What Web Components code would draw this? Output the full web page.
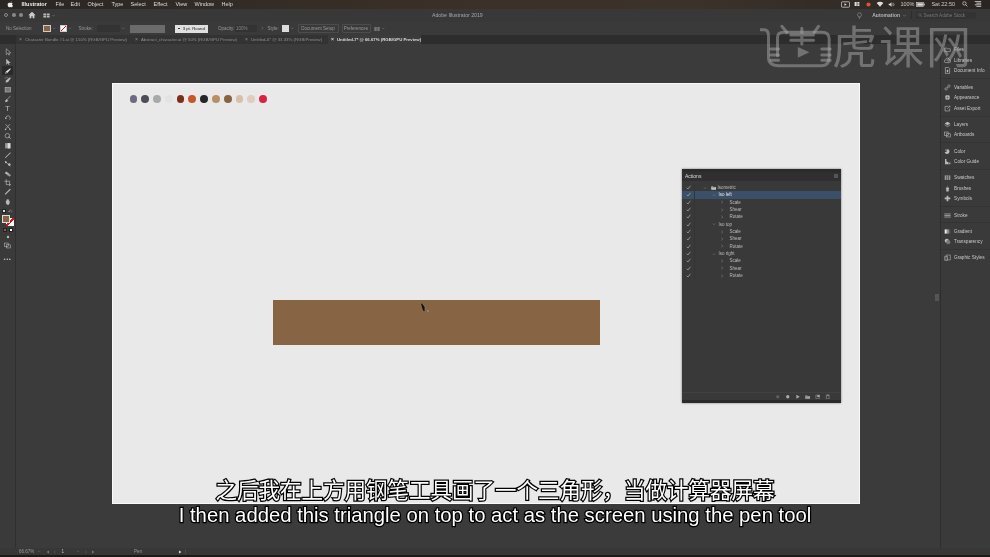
<!DOCTYPE html>
<html>
<head>
<meta charset="utf-8">
<title>Illustrator</title>
<style>
  html, body { margin: 0; height: 100%; background: #3b3b3b; overflow: hidden; }
  body { font-family: "Liberation Sans", Arial, sans-serif; }
</style>
</head>
<body>
<ai-app>
  <menu-bar slot="top"></menu-bar>
  <app-bar slot="top"></app-bar>
  <control-bar slot="top"></control-bar>
  <doc-tabs slot="top"></doc-tabs>
  <tool-bar slot="left"></tool-bar>
  <art-canvas slot="center">
    <actions-panel slot="float">
      <action-row level="0" label="Isometric"></action-row>
      <action-row level="1" label="Iso left" selected></action-row>
      <action-row level="2" label="Scale"></action-row>
      <action-row level="2" label="Shear"></action-row>
      <action-row level="2" label="Rotate"></action-row>
      <action-row level="1" label="Iso top"></action-row>
      <action-row level="2" label="Scale"></action-row>
      <action-row level="2" label="Shear"></action-row>
      <action-row level="2" label="Rotate"></action-row>
      <action-row level="1" label="Iso right"></action-row>
      <action-row level="2" label="Scale"></action-row>
      <action-row level="2" label="Shear"></action-row>
      <action-row level="2" label="Rotate"></action-row>
    </actions-panel>
  </art-canvas>
  <panel-dock slot="right"></panel-dock>
  <status-bar slot="bottom"></status-bar>
  <brand-mark slot="over"></brand-mark>
  <sub-title slot="over"
    zh="之后我在上方用钢笔工具画了一个三角形，当做计算器屏幕"
    en="I then added this triangle on top to act as the screen using the pen tool"></sub-title>
</ai-app>

<script>
const ICONS = {
  select: '<path d="M3 1v8l2-2 1.500 2.500 1-.5L6.200 6.500H9z" fill="none" stroke="currentColor" stroke-width=".8"/>',
  direct: '<path d="M3 1v8l2-2 1.500 2.500 1-.5L6.200 6.500H9z" fill="currentColor"/>',
  pen: '<path d="M8.500 1.500 2.500 6 1.500 9l3-1 4.500-5.500z" fill="currentColor"/><circle cx="3.500" cy="7" r=".7" fill="#333"/>',
  curv: '<path d="M8 1.500 3 5.500 2 9l3.500-1L9 3z" fill="currentColor"/><path d="M1 3q3-2 5 0" fill="none" stroke="currentColor" stroke-width=".6"/>',
  rect: '<rect x="1.500" y="2" width="7" height="6" fill="#777" stroke="currentColor" stroke-width=".8"/>',
  brush: '<path d="M9 1 4 6M4 6q-2 0-2 3q3 0 3-2z" fill="currentColor" stroke="currentColor" stroke-width=".9"/>',
  rotate: '<path d="M2.500 6.500a3 3 0 1 1 5 1" fill="none" stroke="currentColor" stroke-width=".9"/><path d="M1 5l1.500 2L4 5z" fill="currentColor"/>',
  scissors: '<path d="M2 1.500 8 8M8 1.500 2 8" stroke="currentColor" stroke-width=".9"/><circle cx="2" cy="8.500" r="1" fill="currentColor"/><circle cx="8" cy="8.500" r="1" fill="currentColor"/>',
  warp: '<circle cx="4.500" cy="5" r="3" fill="none" stroke="currentColor" stroke-width=".9"/><path d="M6 6l3 3" stroke="currentColor" stroke-width="1"/>',
  mesh: '<rect x="1.500" y="1.500" width="7" height="7" fill="#999"/><rect x="5" y="1.500" width="3.500" height="7" fill="#ddd"/>',
  eyedrop: '<path d="M8.500 1.500 2 8l-1 1.500L2.500 9 9 2.500z" fill="currentColor"/>',
  blend: '<path d="M1.500 1.500 5 5l3.500 3.500" stroke="currentColor"/><circle cx="2.500" cy="3" r="1.300" fill="currentColor"/><circle cx="7" cy="6" r="1.800" fill="currentColor"/>',
  symbol: '<rect x="1.500" y="3" width="5" height="3" transform="rotate(35 4 4.500)" fill="currentColor"/><rect x="4" y="5" width="5" height="3" transform="rotate(35 6.500 6.500)" fill="#999"/>',
  crop: '<path d="M3 .5V7.500H9.500M.5 3H7.500V9.500" fill="none" stroke="currentColor" stroke-width=".9"/>',
  ruler: '<path d="M8.500 1.500 1.500 8.500" stroke="currentColor" stroke-width="1.600"/>',
  hand: '<path d="M2.500 5V3.500h1V2h1v-.5h1V2h1v1.500h1V6.500L6.500 9H4L2.500 6.500z" fill="currentColor"/>',
  home: '<path d="M5 1 .5 5.200H2V9h2.200V6.500h1.600V9H8V5.200h1.500z" fill="currentColor"/>',
  layout: '<path d="M.5 2h4v2.500h-4zM5.500 2h4v2.500h-4zM.5 5.500h4V8h-4zM5.500 5.500h4V8h-4z" fill="currentColor"/>',
  chev: '<path d="M2.500 4 5 6.500 7.500 4" fill="none" stroke="currentColor" stroke-width="1"/>',
  right: '<path d="M3.500 2 7 5 3.500 8" fill="none" stroke="currentColor" stroke-width="1"/>',
  play: '<path d="M2.500 1.500 8.500 5 2.500 8.500z" fill="currentColor"/>',
  check: '<path d="M1.500 5.500 4 8l4.800-6.500" fill="none" stroke="currentColor" stroke-width="1.500"/>',
  folder: '<path d="M.5 2.500h3.500l.8 1H9.500V8.500H.5z" fill="currentColor"/><path d="M2 5h6" stroke="#333" stroke-width=".7"/>',
  bulb: '<circle cx="5" cy="4" r="2.800" fill="none" stroke="currentColor" stroke-width=".8"/><path d="M3.800 8h2.400M4.200 9.300h1.600" stroke="currentColor" stroke-width=".8"/>',
  search: '<circle cx="4" cy="4" r="2.800" fill="none" stroke="currentColor" stroke-width="1.100"/><path d="M6 6l3 3" stroke="currentColor" stroke-width="1.200"/>',
  lines: '<path d="M1 2h8M3 4h6M1 6h8M3 8h6" stroke="currentColor" stroke-width="1"/>',
  stop: '<rect x="2.500" y="2.500" width="5" height="5" fill="currentColor"/>',
  record: '<circle cx="5" cy="5" r="3" fill="currentColor"/>',
  page: '<path d="M1.500 2h7v6h-7z" fill="none" stroke="currentColor" stroke-width=".8"/><path d="M4 2h4.500v3.500H4z" fill="currentColor"/>',
  trash: '<path d="M2.500 3h5v6h-5zM1.500 2h7M4 1h2" fill="none" stroke="currentColor" stroke-width=".9"/>',
  files: '<path d="M1 3h3l1 1h4v4H1z" fill="none" stroke="currentColor" stroke-width=".8"/>',
  libs: '<path d="M2.500 8a2 2 0 0 1 0-4 2.500 2.500 0 0 1 5 0 2 2 0 0 1 0 4z" fill="none" stroke="currentColor" stroke-width=".9"/>',
  doc: '<path d="M2 .5h4.500L8 2v7.500H2z" fill="none" stroke="currentColor" stroke-width=".9"/><rect x="4" y="4" width="2" height="3.500" fill="currentColor"/>',
  vars: '<circle cx="3" cy="7" r="1.700" fill="none" stroke="currentColor" stroke-width=".8"/><circle cx="7" cy="3" r="1.700" fill="none" stroke="currentColor" stroke-width=".8"/><path d="M4.200 5.800 5.800 4.200" stroke="currentColor" stroke-width=".8"/>',
  appear: '<circle cx="5" cy="5" r="3.500" fill="currentColor"/><path d="M1 5h8M5 1v8" stroke="#3a3a3a" stroke-width=".5"/>',
  export: '<path d="M6 2H1.500v6.500H8V5" fill="none" stroke="currentColor" stroke-width=".9"/><path d="M4.500 5.500 8.500 1.500M6.500 1.500h2v2" fill="none" stroke="currentColor" stroke-width=".8"/>',
  layers: '<path d="M5 1 9 3.500 5 6 1 3.500z" fill="currentColor"/><path d="M1 5.500 5 8l4-2.500" fill="none" stroke="currentColor" stroke-width=".9"/>',
  boards: '<rect x="1" y="1.500" width="5" height="5" fill="none" stroke="currentColor" stroke-width=".8"/><rect x="3.500" y="4" width="5.500" height="4.500" fill="none" stroke="currentColor" stroke-width=".8"/>',
  color: '<path d="M5 1.500a3.500 3.500 0 1 1-4 4.500c2 0 3-.5 4-4.500z" fill="currentColor"/><circle cx="3" cy="3" r="1.500" fill="#777"/>',
  guide: '<path d="M1.500 9V1.500h2V5l3 1v3z" fill="currentColor"/><path d="M6.500 9 9 5v4z" fill="#aaa"/>',
  swatches: '<path d="M1 2h8v6.500H1z" fill="#999"/><path d="M3.500 2h1v6.500h-1zM6 2h1v6.500H6z" fill="#444"/>',
  brushes: '<path d="M5 1v3M3 4h4v1.500H3zM3.500 5.500V9h3V5.500" fill="currentColor" stroke="currentColor" stroke-width=".5"/>',
  symbols: '<path d="M3.800 1h2.400v2.500H9V6H6.200v3H3.800V6H1V3.500h2.800z" fill="currentColor"/>',
  stroke: '<path d="M.5 2.800h9M.5 5h9M.5 7.200h9" stroke="currentColor" stroke-width="1"/>',
  gradient: '<rect x="1" y="2" width="3" height="6" fill="#eee"/><rect x="4" y="2" width="3" height="6" fill="#999"/><rect x="7" y="2" width="2" height="6" fill="#555"/>',
  transp: '<circle cx="4" cy="4" r="3" fill="currentColor"/><circle cx="6" cy="6" r="3" fill="#777"/>',
  styles: '<path d="M3 1.500h6v7H3z" fill="none" stroke="currentColor" stroke-width=".8"/><path d="M1 3.500h4V9H1z" fill="#555" stroke="currentColor" stroke-width=".8"/>',
  apple: '<path d="M5.200 2.600C5.600 1.500 6.300 1 7 .8c0 1-.6 1.800-1.800 1.800zM5 3c.8 0 1.200-.4 2-.4.700 0 1.400.4 1.800 1-1.500.9-1.200 3 .4 3.600C8.700 8.500 8 9.500 7.200 9.500c-.8 0-1-.4-1.900-.4s-1.200.4-1.900.4C2.200 9.500 1 7.400 1 5.600 1 3.800 2.200 2.700 3.400 2.700c.7 0 1.200.3 1.600.3z" fill="currentColor"/>',
  cam: '<rect x=".5" y="2" width="9" height="6" rx=".8" fill="none" stroke="currentColor" stroke-width=".8"/><path d="M3.800 3.500 6.500 5 3.800 6.500z" fill="currentColor"/>',
  grid: '<path d="M1 1.500h3.500v7H1zM5.500 1.500h3.500v3H5.500zM5.500 5.500h3.500v3H5.500z" fill="currentColor"/>',
  wifi: '<path d="M5 8.500 .8 3.800a6 6 0 0 1 8.400 0z" fill="currentColor"/>',
  vol: '<path d="M1 3.800h1.800L5 1.800v6.400L2.800 6.200H1z" fill="currentColor"/><path d="M6.300 3.500a2 2 0 0 1 0 3M7.500 2.500a3.500 3.500 0 0 1 0 5" fill="none" stroke="currentColor" stroke-width=".7"/>',
  batt: '<rect x=".5" y="2.800" width="8" height="4.400" fill="none" stroke="currentColor" stroke-width=".7"/><rect x="1.300" y="3.600" width="6.400" height="2.800" fill="currentColor"/><rect x="9" y="4" width=".8" height="2" fill="currentColor"/>'
};

class AiIcon extends HTMLElement {
  connectedCallback() {
    const size = this.getAttribute('size') || 8;
    this.attachShadow({ mode: 'open' }).innerHTML = `
      <style>:host { display: inline-flex; width: ${size}px; height: ${size}px; flex: none; }
      svg { width: 100%; height: 100%; display: block; }</style>
      <svg viewBox="0 0 10 10">${ICONS[this.getAttribute('name')] || ''}</svg>`;
  }
}
customElements.define('ai-icon', AiIcon);

class AiApp extends HTMLElement {
  constructor() {
    super();
    this.attachShadow({ mode: 'open' }).innerHTML = `
      <style>
        :host { display: block; position: relative; width: 990px; height: 557px; overflow: hidden;
          background: #3b3b3b; filter: blur(.35px); }
        .page { display: flex; flex-direction: column; height: 100%; }
        .top { display: flex; flex-direction: column; }
        .work { flex: 1; display: flex; min-height: 0; }
        .center { flex: 1; display: flex; min-width: 0; }
        .foot { display: flex; flex-direction: column; }
      </style>
      <div class="page">
        <div class="top"><slot name="top"></slot></div>
        <div class="work">
          <slot name="left"></slot>
          <div class="center"><slot name="center"></slot></div>
          <slot name="right"></slot>
        </div>
        <div class="foot"><slot name="bottom"></slot></div>
      </div>
      <slot name="over"></slot>`;
  }
}
customElements.define('ai-app', AiApp);

class MenuBar extends HTMLElement {
  constructor() {
    super();
    const items = [['File',15],['Edit',17],['Object',24],['Type',19],['Select',23],['Effect',22],['View',19],['Window',27],['Help',14]];
    this.attachShadow({ mode: 'open' }).innerHTML = `
      <style>
        :host { display: flex; align-items: center; height: 8.500px; padding-left: 7px;
          background: linear-gradient(90deg, #2a2623 0%, #3a3027 45%, #3b322a 70%, #2a2522 100%);
          color: #ddd; font-size: 5.500px; white-space: nowrap; }
        b { width: 34px; margin-left: 8px; color: #eee; flex: none; }
        .menu span { display: inline-block; }
        .menu { display: flex; width: 181px; flex: none; }
        .right { margin-left: auto; padding-right: 8px; display: flex; align-items: center; color: #ccc; }
        ai-icon { color: #ddd; }
      </style>
      <ai-icon name="apple" size="6.500" style="color:#eee"></ai-icon><b>Illustrator</b>
      <div class="menu">${items.map(([t, w]) => `<span style="width:${w}px">${t}</span>`).join('')}</div>
      <div class="right">
        <ai-icon name="cam" size="9"></ai-icon>
        <ai-icon name="grid" size="6" style="margin-left:4px"></ai-icon>
        <ai-icon name="record" size="7" style="margin-left:5px;color:#d3573a"></ai-icon>
        <ai-icon name="wifi" size="8" style="margin-left:4px"></ai-icon>
        <ai-icon name="vol" size="7" style="margin-left:4px"></ai-icon>
        <span style="margin-left:5px">100%</span>
        <ai-icon name="batt" size="9" style="margin-left:2px"></ai-icon>
        <span style="margin-left:6px">Sat 22:50</span>
        <ai-icon name="search" size="6" style="margin-left:7px"></ai-icon>
        <ai-icon name="lines" size="8" style="margin-left:6px"></ai-icon>
      </div>`;
  }
}
customElements.define('menu-bar', MenuBar);

class AppBar extends HTMLElement {
  constructor() {
    super();
    this.attachShadow({ mode: 'open' }).innerHTML = `
      <style>
        :host { display: grid; grid-template-columns: 432px auto 1fr; align-items: center; height: 13.500px;
          background: #383838; color: #a5a5a5; font-size: 5.200px; }
        .l { display: flex; align-items: center; padding-left: 4px; }
        .l i { width: 4px; height: 4px; border-radius: 50%; background: #8a8a8a; margin-right: 3.500px; }
        .l i:first-child { background: none; border: .8px solid #8a8a8a; box-sizing: border-box; }
        .r { display: flex; align-items: center; justify-content: flex-end; padding-right: 14px; }
        .auto { font-weight: bold; margin: 0 2px 0 9px; color: #b5b5b5; font-size: 5px; }
        .search { width: 60px; height: 7px; background: #333; margin-left: 4px; font-size: 4.600px; color: #777;
          display: flex; align-items: center; gap: 1px; padding-left: 2px; box-sizing: border-box; }
        .div { width: 1px; height: 8px; background: #2c2c2c; margin-left: 4px; }
        ai-icon { color: #bbb; }
      </style>
      <div class="l">
        <i></i><i></i><i></i>
        <ai-icon name="home" size="8" style="margin:0 7px 0 1px;color:#ccc"></ai-icon>
        <ai-icon name="layout" size="7"></ai-icon>
        <ai-icon name="chev" size="5" style="margin-left:1.500px;color:#888"></ai-icon>
      </div>
      <div class="c">Adobe Illustrator 2019</div>
      <div class="r">
        <ai-icon name="bulb" size="7" style="color:#999"></ai-icon>
        <span class="auto">Automation</span>
        <ai-icon name="chev" size="5" style="color:#888"></ai-icon>
        <span class="div"></span>
        <div class="search"><ai-icon name="search" size="4.500" style="color:#777"></ai-icon>Search Adobe Stock</div>
      </div>`;
  }
}
customElements.define('app-bar', AppBar);

class ControlBar extends HTMLElement {
  constructor() {
    super();
    this.attachShadow({ mode: 'open' }).innerHTML = `
      <style>
        :host { display: flex; align-items: center; height: 13px; padding-left: 6px; background: #3a3a3a;
          color: #999; font-size: 4.500px; white-space: nowrap; border-bottom: 0; }
        .sw { width: 7.500px; height: 7.500px; flex: none; box-sizing: border-box; border: .5px solid #ccc; }
        .fill { background: #876444; margin-left: 14px; }
        .st { background: linear-gradient(135deg, #fff 46%, #d11 46%, #d11 56%, #fff 56%); margin-left: 3.500px; }
        .field { height: 7px; background: #333; flex: none; }
        .grey { width: 35px; height: 8px; background: #6b6b6b; margin-left: 5px; flex: none; }
        .round { width: 33px; height: 8px; background: #e0e0e0; color: #222; margin-left: 10px; flex: none; display: flex;
          align-items: center; justify-content: center; gap: 3px; font-size: 4.300px; }
        .round i { width: 1.500px; height: 1.500px; background: #222; border-radius: 50%; }
        .style { width: 7.500px; height: 7.500px; background: #ddd; margin-left: 3px; flex: none; }
        .btn { border: .5px solid #4c4c4c; border-radius: 1px; height: 7.500px; line-height: 7.500px; text-align: center; box-sizing: content-box; flex: none; }
        ai-icon { color: #888; }
      </style>
      <span style="width:23px">No Selection</span>
      <span class="sw fill"></span><ai-icon name="chev" size="4.500" style="margin-left:1px"></ai-icon>
      <span class="sw st"></span><ai-icon name="chev" size="4.500" style="margin-left:1px"></ai-icon>
      <span style="margin-left:6px;width:14px">Stroke:</span>
      <span class="field" style="width:23px;margin-left:4px"></span><ai-icon name="chev" size="4.500" style="margin-left:1px"></ai-icon>
      <span class="grey"></span>
      <span class="round"><i></i>3 pt. Round</span>
      <span style="margin-left:10px;width:17px">Opacity:</span>
      <span class="field" style="width:21px;padding-left:1px;line-height:7px;color:#888">100%</span>
      <ai-icon name="right" size="4.500" style="margin:0 3px"></ai-icon>
      <span style="width:11px;margin-left:0">Style:</span>
      <span class="style"></span><ai-icon name="chev" size="4.500" style="margin-left:1px"></ai-icon>
      <span class="btn" style="width:39px;margin-left:3px">Document Setup</span>
      <span class="btn" style="width:27px;margin-left:3px">Preferences</span>
      <ai-icon name="layout" size="6" style="margin-left:3px"></ai-icon><ai-icon name="chev" size="4.500" style="margin-left:1px"></ai-icon>`;
  }
}
customElements.define('control-bar', ControlBar);

class DocTabs extends HTMLElement {
  constructor() {
    super();
    const tabs = [
      ['Character Bundle #1.ai @ 150% (RGB/GPU Preview)', 116, false],
      ['Abstract_character.ai @ 50% (RGB/GPU Preview)', 110, false],
      ['Untitled-6* @ 33.33% (RGB/Preview)', 86, false],
      ['Untitled-7* @ 66.67% (RGB/GPU Preview)', 93, true]
    ];
    this.attachShadow({ mode: 'open' }).innerHTML = `
      <style>
        :host { display: flex; height: 8.500px; padding-left: 16px; background: #2d2d2d; color: #8e8e8e; font-size: 4.300px; white-space: nowrap; }
        .tab { display: flex; align-items: center; gap: 3px; padding-left: 3px; box-sizing: border-box; background: #333; flex: none; }
        .tab.on { background: #3b3b3b; color: #ddd; font-weight: bold; }
        .x { font-size: 5px; }
      </style>
      ${tabs.map(([t, w, on]) => `<div class="tab${on ? ' on' : ''}" style="width:${w}px"><span class="x">×</span><span>${t}</span></div>`).join('')}`;
  }
}
customElements.define('doc-tabs', DocTabs);

class ToolBar extends HTMLElement {
  constructor() {
    super();
    const names = ['select','direct','pen','curv','rect','brush','T','rotate','scissors','warp','mesh','eyedrop','blend','symbol','crop','ruler','hand'];
    this.attachShadow({ mode: 'open' }).innerHTML = `
      <style>
        :host { display: flex; flex-direction: column; align-items: center; width: 15px; flex: none; padding-top: 4px;
          border-right: 1px solid #2f2f2f; background: #3a3a3a; color: #b9b9b9; box-sizing: content-box; }
        .tool { height: 9.330px; width: 11px; display: flex; align-items: center; justify-content: center; font-size: 8px; }
        .tool.on { background: #2a2a2a; color: #e6e6e6; }
        .mini { display: flex; gap: 2px; align-items: center; margin-top: 3px; }
        .sq { width: 4px; height: 4px; background: #ddd; border: .5px solid #222; box-sizing: border-box; }
        .swatches { position: relative; width: 12px; height: 12px; margin-top: 1px; }
        .f, .s { position: absolute; width: 8px; height: 8px; box-sizing: border-box; }
        .f { left: 0; top: 0; background: #876444; border: .5px solid #ddd; z-index: 1; }
        .s { left: 4px; top: 3.500px; background: linear-gradient(135deg, #fff 42%, #d11 42%, #d11 58%, #fff 58%); }
        .dots { margin-top: 8px; letter-spacing: .5px; font-size: 6px; line-height: 4px; }
      </style>
      ${names.map(n => `<div class="tool${n === 'pen' ? ' on' : ''}">${n === 'T' ? 'T' : `<ai-icon name="${n}" size="7.500"></ai-icon>`}</div>`).join('')}
      <div class="mini"><span class="sq"></span><ai-icon name="rotate" size="4.500"></ai-icon></div>
      <div class="swatches"><span class="f"></span><span class="s"></span></div>
      <div class="mini" style="margin-top:1px"><span class="sq" style="background:#876444"></span><span class="sq" style="background:#fff"></span></div>
      <div class="mini" style="margin-top:3px"><ai-icon name="record" size="4"></ai-icon></div>
      <div class="mini" style="margin-top:3px"><ai-icon name="boards" size="7"></ai-icon></div>
      <div class="dots">•••</div>`;
  }
}
customElements.define('tool-bar', ToolBar);

class ColorDot extends HTMLElement {
  constructor() {
    super();
    this.attachShadow({ mode: 'open' }).innerHTML = `
      <style>:host { display: block; width: 7.800px; height: 7.800px; border-radius: 50%; background: var(--c); flex: none; }</style>`;
  }
  connectedCallback() { this.style.setProperty('--c', this.getAttribute('color')); }
}
customElements.define('color-dot', ColorDot);

class ArtCanvas extends HTMLElement {
  constructor() {
    super();
    const dots = ['#6b6a80','#4d4e58','#a8a9a9','#e3e3e3','#7a3018','#c9562a','#25262a','#b98f64','#88633f','#d8bfa8','#dfcdbd','#d9233f'];
    this.attachShadow({ mode: 'open' }).innerHTML = `
      <style>
        :host { display: block; flex: 1; position: relative; background: #3b3b3b; padding: 39.500px 0 0 96px; box-sizing: border-box; }
        .board { position: relative; width: 748px; height: 421px; box-sizing: border-box; background: #e9e9e9; border: 1px solid #fafafa; }
        .dots { display: flex; gap: 4px; padding: 11.200px 0 0 16.500px; }
        .shape { position: absolute; left: 160px; top: 215.500px; width: 327px; height: 45.500px; background: #876444; }
        .cursor { position: absolute; left: 146px; top: 2px; }
        .thumb { position: absolute; right: 1px; top: 250px; width: 4px; height: 7px; background: #555; }
        ::slotted(actions-panel) { position: absolute; left: 666px; top: 125px; }
      </style>
      <div class="board">
        <div class="dots">${dots.map(c => `<color-dot color="${c}"></color-dot>`).join('')}</div>
        <div class="shape">
          <svg class="cursor" width="12" height="12" viewBox="0 0 12 12"><path d="M1.500 1.500 3 1 6 5 6 8.500 4.500 10 3 7z" fill="#111" stroke="#a58a66" stroke-width=".6"/><circle cx="9" cy="9" r="1.200" fill="#b9a59c" stroke="#5c4a3a" stroke-width=".5"/></svg>
        </div>
      </div>
      <div class="thumb"></div>
      <slot name="float"></slot>`;
  }
}
customElements.define('art-canvas', ArtCanvas);

class ActionsPanel extends HTMLElement {
  constructor() {
    super();
    const foot = ['stop','record','play','folder','page','trash'];
    this.attachShadow({ mode: 'open' }).innerHTML = `
      <style>
        :host { display: flex; flex-direction: column; width: 158.500px; height: 234.500px; background: #393939;
          color: #bdbdbd; font-size: 4.500px; box-shadow: 0 0 2px rgba(0,0,0,.5); }
        .grip { height: 3px; background: #2b2b2b; flex: none; }
        .head { height: 9.500px; background: #2f2f2f; display: flex; align-items: center; padding: 0 3px; color: #ddd; font-size: 5px; flex: none; }
        .head span { margin-right: auto; }
        .head i { width: 4px; height: 4px; background: #555; }
        .rows { flex: 1; padding-top: 3px; }
        .foot { height: 8.500px; border-top: 1px solid #414141; box-sizing: border-box; display: flex; align-items: center; justify-content: flex-end; gap: 4.500px; padding-right: 10.500px; color: #aaa; flex: none; }
        .base { height: 3px; background: #2b2b2b; flex: none; }
      </style>
      <div class="grip"></div>
      <div class="head"><span>Actions</span><i></i></div>
      <div class="rows"><slot></slot></div>
      <div class="foot">${foot.map((n, i) => `<ai-icon name="${n}" size="5.500" style="${i ? '' : 'opacity:.35'}"></ai-icon>`).join('')}</div>
      <div class="base"></div>`;
  }
}
customElements.define('actions-panel', ActionsPanel);

class ActionRow extends HTMLElement {
  connectedCallback() {
    const level = +this.getAttribute('level');
    const chevAt = [23, 31.500, 40][level];
    const label = this.getAttribute('label');
    const open = level < 2;
    this.attachShadow({ mode: 'open' }).innerHTML = `
      <style>
        :host { display: flex; align-items: center; height: 7.340px; box-sizing: border-box; }
        :host([selected]) { background: #3c4f68; color: #e8e8e8; }
        .check { width: 13px; padding-left: 4px; box-sizing: border-box; display: flex; border-right: 1px solid #343434; height: 100%; align-items: center; color: #ddd; flex: none; }
        .tree { display: flex; align-items: center; gap: 1.500px; padding-left: ${chevAt - 15}px; }
        ai-icon { color: #a8a8a8; }
        span.t { margin-left: ${level === 0 ? 0 : level === 1 ? 1.5 : 4}px; }
      </style>
      <div class="check"><ai-icon name="check" size="5"></ai-icon></div>
      <div class="tree">
        <ai-icon name="${open ? 'chev' : 'right'}" size="4"></ai-icon>
        ${level === 0 ? '<ai-icon name="folder" size="5.500" style="color:#ccc;margin-left:2px"></ai-icon>' : ''}
        <span class="t">${label}</span>
      </div>`;
  }
}
customElements.define('action-row', ActionRow);

class PanelDock extends HTMLElement {
  constructor() {
    super();
    const groups = [
      [['files','Files'],['libs','Libraries'],['doc','Document Info']],
      [['vars','Variables'],['appear','Appearance'],['export','Asset Export']],
      [['layers','Layers'],['boards','Artboards']],
      [['color','Color'],['guide','Color Guide']],
      [['swatches','Swatches'],['brushes','Brushes'],['symbols','Symbols']],
      [['stroke','Stroke']],
      [['gradient','Gradient'],['transp','Transparency']],
      [['styles','Graphic Styles']]
    ];
    this.attachShadow({ mode: 'open' }).innerHTML = `
      <style>
        :host { display: block; width: 50px; flex: none; background: #3a3a3a; color: #c9c9c9; font-size: 4.700px;
          border-left: 1px solid #2e2e2e; box-sizing: border-box; padding-top: 1px; white-space: nowrap; }
        .group { padding: 0 0 2px; border-bottom: 1px solid #333; margin-bottom: 2.500px; }
        .group:last-child { border-bottom: 0; }
        .item { display: flex; align-items: center; height: 10.600px; padding-left: 3px; gap: 3px; }
        ai-icon { color: #bbb; }
      </style>
      ${groups.map(g => `<div class="group">${g.map(([ic, t]) => `<div class="item"><ai-icon name="${ic}" size="7"></ai-icon><span>${t}</span></div>`).join('')}</div>`).join('')}`;
  }
}
customElements.define('panel-dock', PanelDock);

class StatusBar extends HTMLElement {
  constructor() {
    super();
    this.attachShadow({ mode: 'open' }).innerHTML = `
      <style>
        :host { display: flex; align-items: center; height: 7px; padding-left: 19px; background: #373737; color: #999;
          font-size: 4.500px; border-bottom: 2px solid #1c1a18; box-sizing: content-box; white-space: nowrap; }
        ai-icon { color: #777; }
        .n { color: #bbb; width: 14px; margin-left: 5px; }
      </style>
      <span style="width:18px">66.67%</span><ai-icon name="chev" size="4.500"></ai-icon>
      <ai-icon name="play" size="4" style="margin-left:4px;transform:scaleX(-1)"></ai-icon>
      <ai-icon name="right" size="4" style="margin-left:3px;transform:scaleX(-1)"></ai-icon>
      <span class="n">1</span><ai-icon name="chev" size="4.500"></ai-icon>
      <ai-icon name="right" size="4" style="margin-left:4px"></ai-icon>
      <ai-icon name="play" size="4" style="margin-left:3px"></ai-icon>
      <span style="margin-left:39px;width:44px">Pen</span>
      <ai-icon name="play" size="4" style="color:#ddd"></ai-icon>
      <span style="margin-left:3px;color:#666">|</span>`;
  }
}
customElements.define('status-bar', StatusBar);

class BrandMark extends HTMLElement {
  constructor() {
    super();
    this.attachShadow({ mode: 'open' }).innerHTML = `
      <style>
        :host { position: absolute; left: 760px; top: 22px; display: flex; align-items: center; height: 46px;
          color: rgba(170,170,170,.5); pointer-events: none; }
        svg { width: 72px; height: 45px; flex: none; margin-top: 3px; }
        span { font: 400 45px/46px "Noto Sans CJK SC", "Noto Sans", sans-serif; letter-spacing: 2px; }
      </style>
      <svg viewBox="30 25 215 135" fill="none" stroke="currentColor" stroke-width="9" stroke-linecap="round">
        <path d="M32 42H42Q55 42 55 60V125Q55 150 85 150H215Q237 150 237 125V70Q237 50 215 50H100Q82 50 82 65V120"/>
        <path d="M95 32 110 50M205 32 192 50M155 38V85M122 58H190M122 74H190"/>
        <path d="M62 100H85M62 118H85M62 134H85M215 100H240M215 118H240M215 134H240"/>
        <path d="M143 94V126L178 110Z" fill="currentColor" stroke="none"/>
      </svg>
      <span>虎课网</span>`;
  }
}
customElements.define('brand-mark', BrandMark);

class SubTitle extends HTMLElement {
  connectedCallback() {
    this.attachShadow({ mode: 'open' }).innerHTML = `
      <style>
        :host { position: absolute; left: 0; right: 0; top: 476px; display: flex; flex-direction: column; align-items: center;
          color: #fff; pointer-events: none; white-space: nowrap; }
        div { -webkit-text-stroke: 2.500px #000; paint-order: stroke fill; }
        .zh { font: 21.500px/26px "Noto Sans CJK SC", sans-serif; }
        .en { font: 20.300px/24px "Liberation Sans", Arial, sans-serif; margin-top: 1px; }
      </style>
      <div class="zh">${this.getAttribute('zh')}</div>
      <div class="en">${this.getAttribute('en')}</div>`;
  }
}
customElements.define('sub-title', SubTitle);
</script>
</body>
</html>
